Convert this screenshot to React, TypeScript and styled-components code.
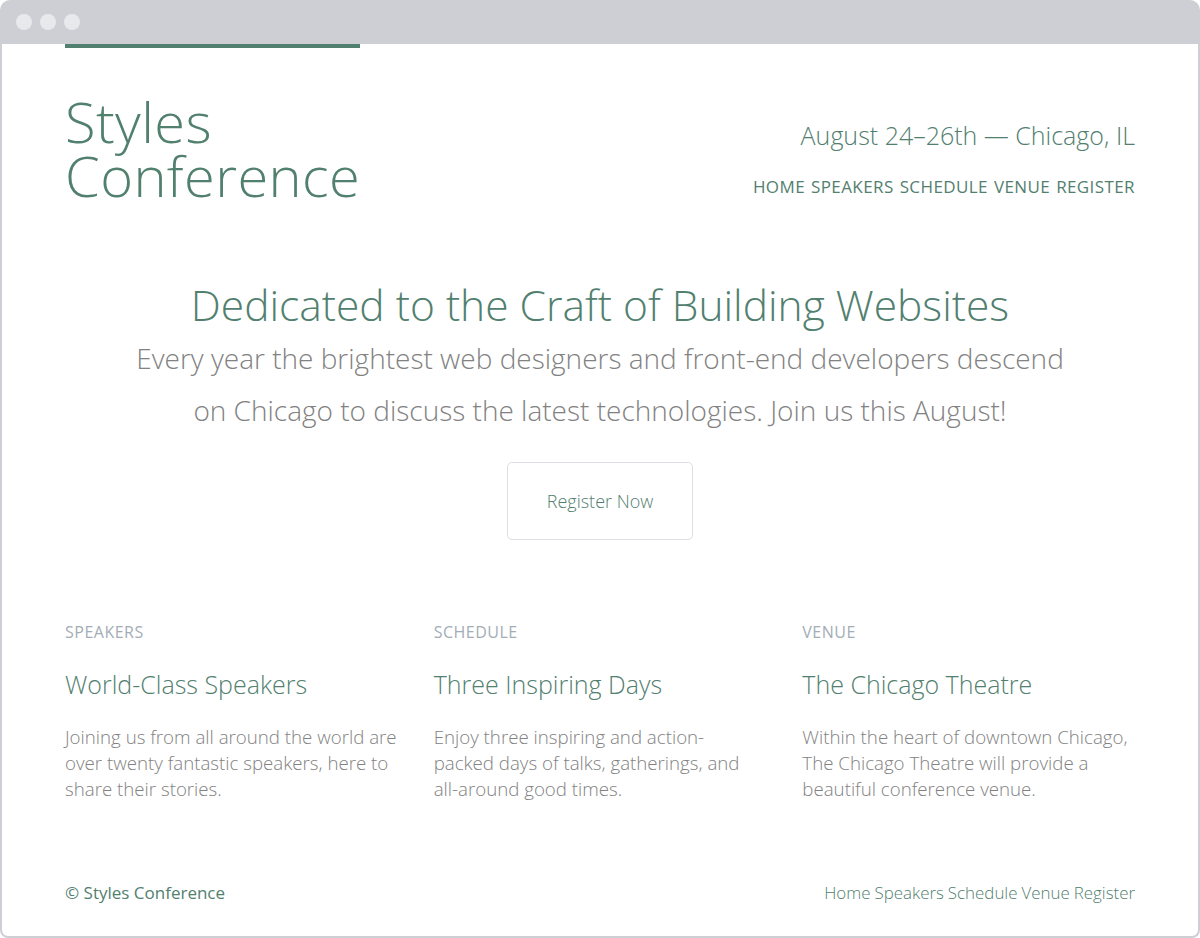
import { Fragment } from "react";
import styled, { createGlobalStyle } from "styled-components";

const GREEN = "#52806f";
const GRAY = "#828282";

const GlobalStyle = createGlobalStyle`
  html, body {
    margin: 0;
    padding: 0;
    background: #ffffff;
  }
  * {
    box-sizing: border-box;
  }
`;

const Frame = styled.div`
  width: 1200px;
  height: 938px;
  display: flex;
  flex-direction: column;
  font-family: "Open Sans", "Liberation Sans", sans-serif;
`;

const TopBar = styled.div`
  height: 44px;
  flex: none;
  background: #cdcfd4;
  border-radius: 10px 10px 0 0;
  display: flex;
  align-items: center;
  gap: 8px;
  padding-left: 16px;
`;

const Dot = styled.span`
  width: 16px;
  height: 16px;
  border-radius: 50%;
  background: #e8e9ec;
`;

const Viewport = styled.div`
  flex: 1;
  border: 2px solid #cdcfd4;
  border-top: none;
  border-radius: 0 0 8px 8px;
  padding: 0 63px;
  display: flex;
  flex-direction: column;
`;

const Header = styled.header`
  display: flex;
  justify-content: space-between;
  align-items: flex-start;
`;

const Logo = styled.h1`
  margin: 0;
  border-top: 4px solid ${GREEN};
  padding-top: 46px;
  font-size: 56px;
  line-height: 54px;
  font-weight: 300;
  letter-spacing: 0.4px;
  color: ${GREEN};
`;

const HeaderSide = styled.div`
  display: flex;
  flex-direction: column;
  align-items: flex-end;
  padding-top: 73px;
`;

const Tagline = styled.h3`
  margin: 0;
  font-size: 25px;
  line-height: 36px;
  font-weight: 300;
  color: ${GREEN};
`;

const Nav = styled.nav<{ $upper?: boolean }>`
  display: flex;
  gap: ${(p) => (p.$upper ? "6px" : "4px")};
  margin-top: ${(p) => (p.$upper ? "23px" : "0")};
`;

const NavLink = styled.a<{ $upper?: boolean }>`
  color: ${GREEN};
  text-decoration: none;
  font-size: ${(p) => (p.$upper ? "17px" : "16.9px")};
  line-height: 22px;
  font-weight: ${(p) => (p.$upper ? 400 : 300)};
  letter-spacing: ${(p) => (p.$upper ? "0.4px" : "0")};
  text-transform: ${(p) => (p.$upper ? "uppercase" : "none")};
`;

const Hero = styled.section`
  margin-top: 77px;
  display: flex;
  flex-direction: column;
  align-items: center;
  text-align: center;
`;

const HeroTitle = styled.h2`
  margin: 0;
  font-size: 42.5px;
  line-height: 52px;
  font-weight: 300;
  color: ${GREEN};
`;

const HeroText = styled.p`
  margin: 1px 0 0;
  max-width: 948px;
  font-size: 28px;
  line-height: 52px;
  font-weight: 300;
  color: ${GRAY};
`;

const Button = styled.a`
  margin-top: 26px;
  display: inline-block;
  padding: 27px 39px;
  border: 1px solid #dcdfe3;
  border-radius: 5px;
  color: ${GREEN};
  font-size: 18px;
  line-height: 22px;
  font-weight: 300;
  text-decoration: none;
`;

const Columns = styled.section`
  margin-top: 81px;
  display: grid;
  grid-template-columns: repeat(3, 1fr);
  column-gap: 36px;
`;

const Column = styled.div`
  display: flex;
  flex-direction: column;
`;

const Label = styled.h5`
  margin: 0;
  font-size: 16px;
  line-height: 22px;
  font-weight: 400;
  letter-spacing: 0.5px;
  text-transform: uppercase;
  color: #a3adb6;
`;

const ColTitle = styled.h3`
  margin: 24px 0 0;
  font-size: 25px;
  line-height: 34px;
  font-weight: 300;
  color: ${GREEN};
`;

const ColText = styled.p`
  margin: 23px 0 0;
  font-size: 18.7px;
  line-height: 26px;
  font-weight: 300;
  color: ${GRAY};
  white-space: nowrap;
`;

const Footer = styled.footer`
  margin-top: 80px;
  display: flex;
  justify-content: space-between;
  align-items: flex-start;
`;

const Copyright = styled.small`
  font-size: 17px;
  line-height: 22px;
  font-weight: 400;
  color: ${GREEN};
`;

const links = ["Home", "Speakers", "Schedule", "Venue", "Register"];

const features = [
  {
    label: "Speakers",
    title: "World-Class Speakers",
    lines: [
      "Joining us from all around the world are",
      "over twenty fantastic speakers, here to",
      "share their stories.",
    ],
  },
  {
    label: "Schedule",
    title: "Three Inspiring Days",
    lines: [
      "Enjoy three inspiring and action-",
      "packed days of talks, gatherings, and",
      "all-around good times.",
    ],
  },
  {
    label: "Venue",
    title: "The Chicago Theatre",
    lines: [
      "Within the heart of downtown Chicago,",
      "The Chicago Theatre will provide a",
      "beautiful conference venue.",
    ],
  },
];

const App = () => (
  <>
    <GlobalStyle />
    <Frame>
      <TopBar>
        <Dot />
        <Dot />
        <Dot />
      </TopBar>
      <Viewport>
        <Header>
          <Logo>
            Styles
            <br />
            Conference
          </Logo>
          <HeaderSide>
            <Tagline>August 24–26th — Chicago, IL</Tagline>
            <Nav $upper>
              {links.map((l) => (
                <NavLink key={l} href="#" $upper>
                  {l}
                </NavLink>
              ))}
            </Nav>
          </HeaderSide>
        </Header>

        <Hero>
          <HeroTitle>Dedicated to the Craft of Building Websites</HeroTitle>
          <HeroText>
            Every year the brightest web designers and front-end developers
            descend on Chicago to discuss the latest technologies. Join us this
            August!
          </HeroText>
          <Button href="#">Register Now</Button>
        </Hero>

        <Columns>
          {features.map((f) => (
            <Column key={f.label}>
              <Label>{f.label}</Label>
              <ColTitle>{f.title}</ColTitle>
              <ColText>
                {f.lines.map((line, i) => (
                  <Fragment key={i}>
                    {i > 0 && <br />}
                    {line}
                  </Fragment>
                ))}
              </ColText>
            </Column>
          ))}
        </Columns>

        <Footer>
          <Copyright>© Styles Conference</Copyright>
          <Nav>
            {links.map((l) => (
              <NavLink key={l} href="#">
                {l}
              </NavLink>
            ))}
          </Nav>
        </Footer>
      </Viewport>
    </Frame>
  </>
);

export default App;
